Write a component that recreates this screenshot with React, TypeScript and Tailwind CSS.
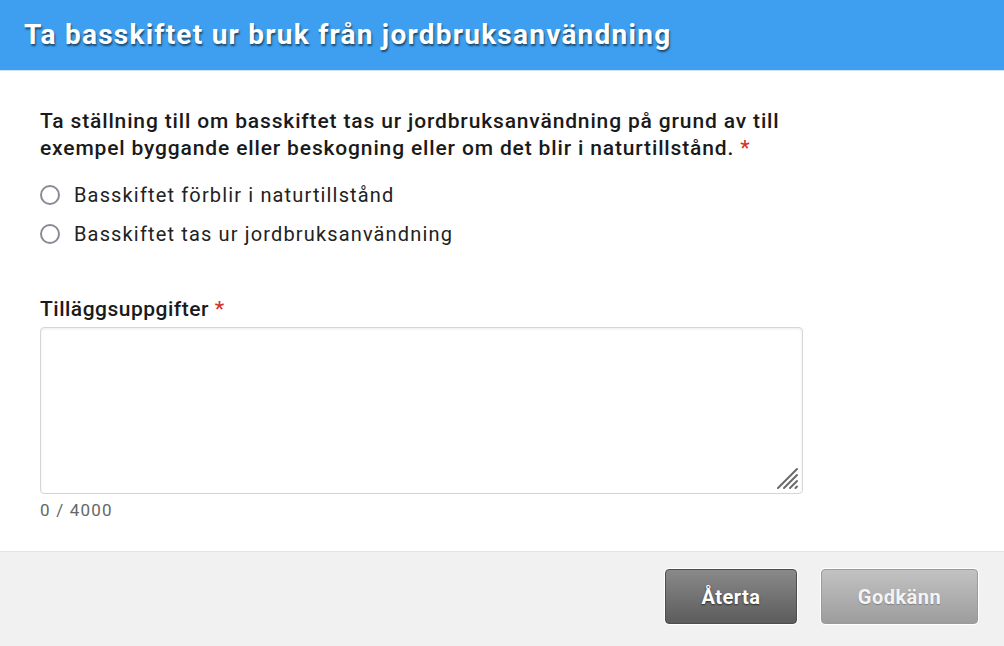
import { useState } from "react";

const options = ["Basskiftet förblir i naturtillstånd", "Basskiftet tas ur jordbruksanvändning"];

export default function App() {
	const [choice, setChoice] = useState<number | null>(null);
	const [text, setText] = useState("");

	return (
		<div className="w-[1004px] h-[646px] flex flex-col bg-white font-['Roboto',sans-serif] text-[#222]">
			{/* Header */}
			<div className="h-[71px] shrink-0 bg-[#3e9ff0] border-b border-[#cfe3f5] flex items-center px-6">
				<h1 className="text-[28px] font-bold text-white tracking-[1.25px] [text-shadow:1px_2px_2px_rgba(0,0,0,0.55)]">
					Ta basskiftet ur bruk från jordbruksanvändning
				</h1>
			</div>

			{/* Body */}
			<div className="flex-1 px-10 pt-[37px]">
				<p className="text-[21px] font-medium leading-[27px] tracking-[0.85px] max-w-[780px] text-[#1a1a1a]">
					Ta ställning till om basskiftet tas ur jordbruksanvändning på grund av till exempel byggande eller beskogning eller om det blir i naturtillstånd.{" "}
					<span className="text-[#d9302c]">*</span>
				</p>
				<div className="mt-[19px] flex flex-col gap-[11px]">
					{options.map((o, i) => (
						<label key={o} className="flex items-center gap-[14px] h-[28px] cursor-pointer" onClick={() => setChoice(i)}>
							<span className="w-[20px] h-[20px] rounded-full border-2 border-[#8a8a96] flex items-center justify-center">
								{choice === i && <span className="w-[10px] h-[10px] rounded-full bg-[#3e9ff0]" />}
							</span>
							<span className="text-[20px] tracking-[1.15px] text-[#222]">{o}</span>
						</label>
					))}
				</div>

				<div className="mt-[47px] h-[28px] leading-[28px] text-[21px] font-medium tracking-[0.5px] text-[#1a1a1a]">
					Tilläggsuppgifter <span className="text-[#d9302c]">*</span>
				</div>
				<div className="relative mt-[4px] w-[763px] h-[167px]">
					<textarea
						value={text}
						onChange={(e) => setText(e.target.value)}
						className="block w-full h-full resize-none border border-[#d6d6d6] rounded-[4px] shadow-[inset_0_1px_3px_rgba(0,0,0,0.08)] outline-none p-2 text-[18px]"
					/>
					<svg className="absolute right-[3px] bottom-[3px] pointer-events-none" width="24" height="24" viewBox="0 0 24 24">
						<g stroke="#6a6a6a" strokeWidth="2" strokeLinecap="round">
							<line x1="2" y1="21" x2="21" y2="2" />
							<line x1="8" y1="21" x2="21" y2="8" />
							<line x1="14" y1="21" x2="21" y2="14" />
							<line x1="19.5" y1="21" x2="21" y2="19.5" />
						</g>
					</svg>
				</div>
				<div className="mt-[4px] text-[17px] tracking-[1.2px] text-[#666]">{text.length} / 4000</div>
			</div>

			{/* Footer */}
			<div className="h-[95px] shrink-0 bg-[#f1f1f1] border-t border-[#e4e4e4] flex items-start justify-end gap-6 pt-[17px] pr-[26px]">
				<button className="w-[132px] h-[55px] rounded-[4px] border border-[#4e4e4e] bg-gradient-to-b from-[#8a8a8a] to-[#5c5c5c] text-white text-[20px] font-bold tracking-[0.5px] [text-shadow:0_1px_2px_rgba(0,0,0,0.6)] shadow-[0_0_0_1px_#fff]">
					Återta
				</button>
				<button className="w-[157px] h-[55px] rounded-[4px] border border-[#9a9a9a] bg-gradient-to-b from-[#c2c2c2] to-[#9d9d9d] text-[#f4f4f4] text-[20px] font-bold tracking-[0.5px] [text-shadow:0_1px_1px_rgba(0,0,0,0.25)] shadow-[0_0_0_1px_#fff]">
					Godkänn
				</button>
			</div>
		</div>
	);
}
